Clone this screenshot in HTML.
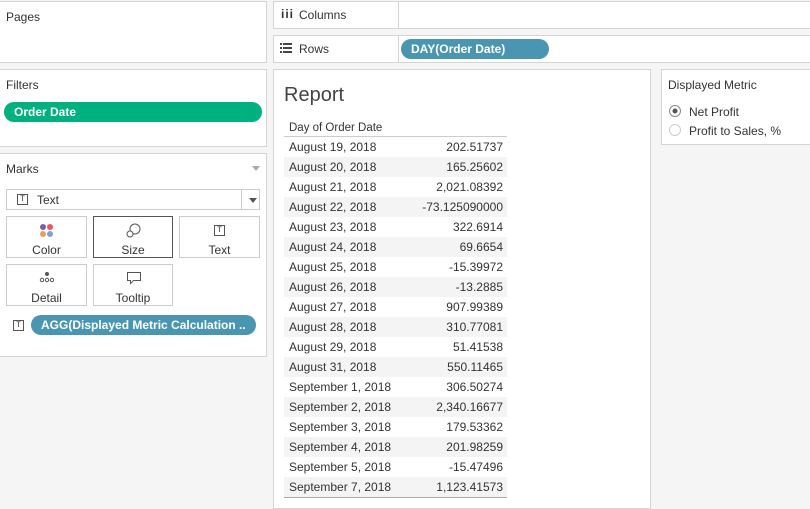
<!DOCTYPE html><html><head><style>
body{margin:0;width:810px;height:500px;background:#f5f5f5;font-family:"Liberation Sans",sans-serif;font-size:12px;color:#333;position:relative;overflow:hidden}
.p{position:absolute;background:#fff;border:1px solid #d4d4d4;box-sizing:border-box}
.t{position:absolute}
.pill{position:absolute;border-radius:10px;color:#fff;font-weight:bold;font-size:12px;line-height:20px;box-sizing:border-box;padding-left:10px}
.card{position:absolute;border:1px solid #ccc;background:#fff;box-sizing:border-box;text-align:center;font-size:12px}
.card span{position:absolute;left:0;right:0;top:26px}
.tb{display:inline-block;width:9px;height:9px;border:1px solid #555;font-size:8px;line-height:9px;text-align:center;font-family:"Liberation Mono",monospace}
table{position:absolute;left:284px;top:119px;border-collapse:collapse;width:223px}
td{height:20px;padding:0 5px;font-size:12px;color:#333}
td:last-child{text-align:right;padding-right:4px}
tr:nth-child(odd) td{background:#f4f4f4}
tr.h td{height:17px;background:#fff;border-bottom:1px solid #ccc;font-size:11.5px}
tr:last-child td{border-bottom:1px solid #aaa}
</style></head><body>
<div class="p" style="left:-1px;top:1px;width:268px;height:62px"></div>
<div class="t" style="left:6px;top:10px">Pages</div>
<div class="p" style="left:-1px;top:69px;width:268px;height:78px"></div>
<div class="t" style="left:6px;top:78px">Filters</div>
<div class="pill" style="left:4px;top:102px;width:258px;background:#00b180">Order Date</div>
<div class="p" style="left:-1px;top:153px;width:268px;height:204px"></div>
<div class="t" style="left:6px;top:162px">Marks</div>
<div class="t" style="left:252px;top:166px;width:0;height:0;border:4px solid transparent;border-top:5px solid #aaa"></div>
<div class="card" style="left:6px;top:189px;width:254px;height:21px;text-align:left"><span class="tb" style="position:absolute;left:10px;top:4px">T</span><span style="position:absolute;left:30px;top:3px">Text</span><div style="position:absolute;left:234px;top:0;height:19px;border-left:1px solid #ccc"></div><div style="position:absolute;left:242px;top:8px;border:4px solid transparent;border-top:5px solid #555"></div></div>
<div class="card" style="left:6px;top:216px;width:81px;height:42px"><svg style="position:absolute;left:32px;top:6px" width="16" height="16"><circle cx="4" cy="4" r="3" fill="#7b5e9d"/><circle cx="11" cy="4" r="3" fill="#e85563"/><circle cx="4" cy="11" r="3" fill="#f09a5b"/><circle cx="11" cy="11" r="3" fill="#7ba3d0"/></svg><span>Color</span></div>
<div class="card" style="left:93px;top:216px;width:80px;height:42px;border-color:#555"><svg style="position:absolute;left:32px;top:5px" width="16" height="16" fill="none" stroke="#555"><circle cx="9" cy="7" r="5"/><circle cx="4" cy="12" r="3" fill="#fff"/></svg><span>Size</span></div>
<div class="card" style="left:179px;top:216px;width:81px;height:42px"><span class="tb" style="position:absolute;left:34px;top:8px;right:auto">T</span><span>Text</span></div>
<div class="card" style="left:6px;top:264px;width:81px;height:42px"><svg style="position:absolute;left:32px;top:6px" width="16" height="12" fill="none" stroke="#555"><circle cx="8" cy="3" r="1.5" fill="#555"/><circle cx="3" cy="9" r="1.7"/><circle cx="8" cy="9" r="1.7"/><circle cx="13" cy="9" r="1.7"/></svg><span>Detail</span></div>
<div class="card" style="left:93px;top:264px;width:80px;height:42px"><svg style="position:absolute;left:32px;top:6px" width="16" height="14" fill="none" stroke="#555"><path d="M1.5 1.5h13v8h-7l-3 3v-3h-3z"/></svg><span>Tooltip</span></div>
<span class="tb" style="position:absolute;left:13px;top:320px">T</span>
<div class="pill" style="left:31px;top:315px;width:225px;background:#4a96b2">AGG(Displayed Metric Calculation ..</div>
<div class="p" style="left:273px;top:1px;width:540px;height:28px"></div>
<div class="t" style="left:398px;top:1px;height:28px;border-left:1px solid #d4d4d4"></div>
<div class="t" style="left:281px;top:7px;font-weight:bold;font-size:12px;letter-spacing:1px">iii</div>
<div class="t" style="left:299px;top:8px">Columns</div>
<div class="p" style="left:273px;top:35px;width:540px;height:28px"></div>
<div class="t" style="left:398px;top:35px;height:28px;border-left:1px solid #d4d4d4"></div>
<svg class="t" style="left:280px;top:43px" width="12" height="10" fill="#444"><rect x="0" y="0" width="2" height="2"/><rect x="3" y="0" width="9" height="2"/><rect x="0" y="4" width="2" height="2"/><rect x="3" y="4" width="9" height="2"/><rect x="0" y="8" width="2" height="2"/><rect x="3" y="8" width="9" height="2"/></svg>
<div class="t" style="left:299px;top:42px">Rows</div>
<div class="pill" style="left:401px;top:39px;width:148px;background:#4a96b2">DAY(Order Date)</div>
<div class="p" style="left:273px;top:69px;width:378px;height:440px"></div>
<div class="t" style="left:284px;top:84px;font-size:20px;color:#444">Report</div>
<table>
<tr class="h"><td>Day of Order Date</td><td></td></tr>
<tr><td>August 19, 2018</td><td>202.51737</td></tr>
<tr><td>August 20, 2018</td><td>165.25602</td></tr>
<tr><td>August 21, 2018</td><td>2,021.08392</td></tr>
<tr><td>August 22, 2018</td><td>-73.125090000</td></tr>
<tr><td>August 23, 2018</td><td>322.6914</td></tr>
<tr><td>August 24, 2018</td><td>69.6654</td></tr>
<tr><td>August 25, 2018</td><td>-15.39972</td></tr>
<tr><td>August 26, 2018</td><td>-13.2885</td></tr>
<tr><td>August 27, 2018</td><td>907.99389</td></tr>
<tr><td>August 28, 2018</td><td>310.77081</td></tr>
<tr><td>August 29, 2018</td><td>51.41538</td></tr>
<tr><td>August 31, 2018</td><td>550.11465</td></tr>
<tr><td>September 1, 2018</td><td>306.50274</td></tr>
<tr><td>September 2, 2018</td><td>2,340.16677</td></tr>
<tr><td>September 3, 2018</td><td>179.53362</td></tr>
<tr><td>September 4, 2018</td><td>201.98259</td></tr>
<tr><td>September 5, 2018</td><td>-15.47496</td></tr>
<tr><td>September 7, 2018</td><td>1,123.41573</td></tr>
</table>
<div class="p" style="left:661px;top:69px;width:152px;height:76px"></div>
<div class="t" style="left:668px;top:78px">Displayed Metric</div>
<svg class="t" style="left:668px;top:104px" width="14" height="34"><circle cx="7" cy="7" r="5.5" fill="#fff" stroke="#888"/><circle cx="7" cy="7" r="2.5" fill="#555"/><circle cx="7" cy="26" r="5.5" fill="#fff" stroke="#ccc"/></svg>
<div class="t" style="left:689px;top:105px">Net Profit</div>
<div class="t" style="left:689px;top:124px">Profit to Sales, %</div>
</body></html>
